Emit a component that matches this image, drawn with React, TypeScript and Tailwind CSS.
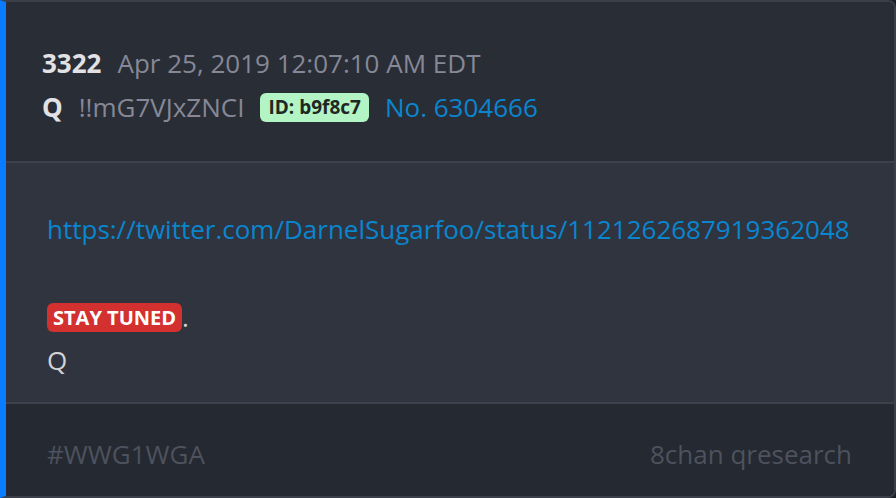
export default function App() {
  return (
    <div className="w-[896px] h-[498px] bg-[#1c1f25] font-['Open_Sans',sans-serif]">
      <div className="h-full flex flex-col border-l-[6px] border-l-[#0a7cff] border-y-2 border-r-2 border-y-[#3b3f49] border-r-[#3b3f49] rounded-r-lg overflow-hidden">
        {/* Header */}
        <div className="h-[159px] shrink-0 bg-[#292d36] pl-[36px] pt-[39px] text-[26px] leading-[44px]">
          <div className="flex items-center gap-4">
            <span className="font-bold text-[#e2e2e4]">3322</span>
            <span className="text-[#868896]">Apr 25, 2019 12:07:10 AM EDT</span>
          </div>
          <div className="flex items-center gap-4">
            <span className="font-bold text-[#e2e2e4]">Q</span>
            <span className="text-[#868896]">!!mG7VJxZNCI</span>
            <span className="h-[29px] px-[8px] rounded-[6px] bg-[#b2f4c4] text-[#1e2722] text-[19px] font-bold leading-[29px]">
              ID: b9f8c7
            </span>
            <span className="text-[#0a86cf]">No. 6304666</span>
          </div>
        </div>

        <div className="h-[2px] shrink-0 bg-[#3d414b]" />

        {/* Body */}
        <div className="h-[239px] shrink-0 bg-[#2f343e] pl-[41px] pt-[45px] text-[26px] leading-[43px]">
          <div className="text-[#0a86cf]">
            https://twitter.com/DarnelSugarfoo/status/1121262687919362048
          </div>
          <div className="mt-[45px] flex items-center text-[#d3d3d5]">
            <span className="h-[29px] px-[6px] rounded-[6px] bg-[#d33030] text-white text-[20px] font-bold leading-[29px]">
              STAY TUNED
            </span>
            <span>.</span>
          </div>
          <div className="text-[#d3d3d5]">Q</div>
        </div>

        <div className="h-[2px] shrink-0 bg-[#3d414b]" />

        {/* Footer */}
        <div className="flex-1 bg-[#252931] pl-[41px] pr-[42px] pt-[8px] flex items-center justify-between text-[26px] text-[#4d525e]">
          <span>#WWG1WGA</span>
          <span>8chan qresearch</span>
        </div>
      </div>
    </div>
  );
}
